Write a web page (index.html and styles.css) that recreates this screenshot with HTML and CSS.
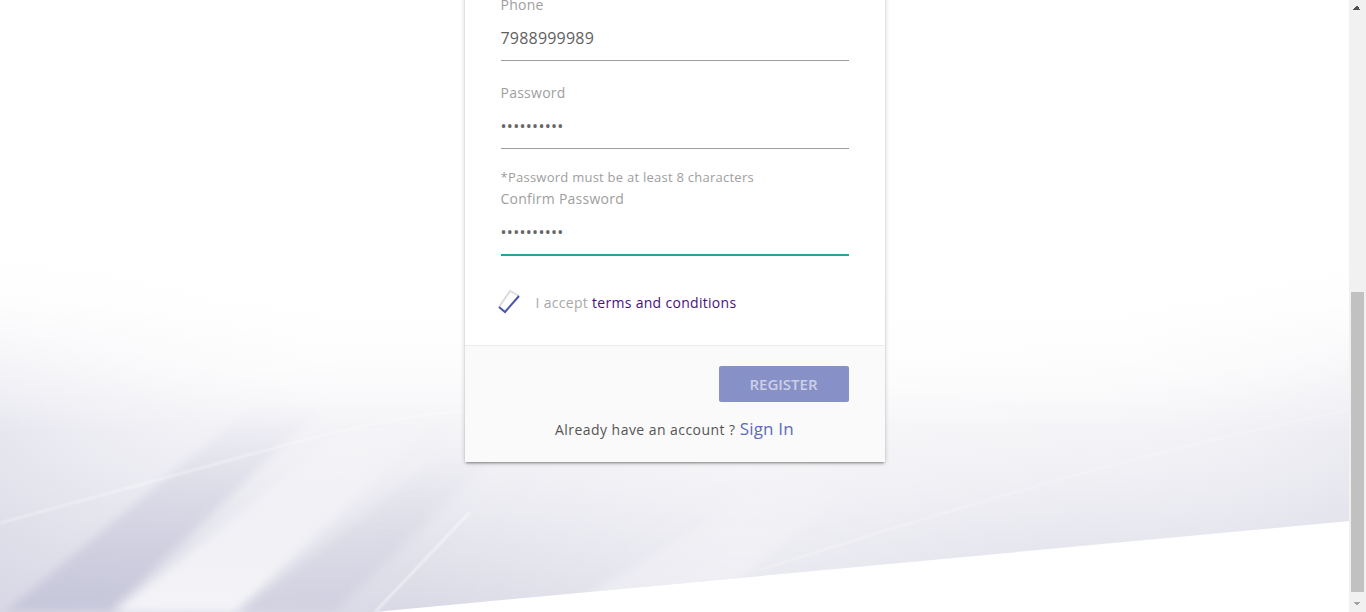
FILE: index.html
```html
<!DOCTYPE html>
<html lang="en">
<head>
<meta charset="utf-8">
<title>Register</title>
<link rel="stylesheet" href="styles.css">
</head>
<body>
<div class="page">
  <svg class="bg" viewBox="0 0 1349 362" preserveAspectRatio="none" aria-hidden="true">
    <defs>
      <linearGradient id="base" x1="0" y1="0" x2="0" y2="1">
        <stop offset="0" stop-color="#ffffff"/>
        <stop offset="0.3" stop-color="#fbfbfc"/>
        <stop offset="0.6" stop-color="#efeff4"/>
        <stop offset="1" stop-color="#d9d9e6"/>
      </linearGradient>
      <linearGradient id="side" x1="0" y1="0" x2="1" y2="0">
        <stop offset="0" stop-color="#d4d4e4" stop-opacity="0.4"/>
        <stop offset="0.3" stop-color="#ffffff" stop-opacity="0"/>
        <stop offset="0.55" stop-color="#ffffff" stop-opacity="0.35"/>
        <stop offset="0.8" stop-color="#ffffff" stop-opacity="0.1"/>
        <stop offset="1" stop-color="#dcdce8" stop-opacity="0.3"/>
      </linearGradient>
      <linearGradient id="fadeTop" x1="0" y1="0" x2="0" y2="1">
        <stop offset="0" stop-color="#ffffff" stop-opacity="1"/>
        <stop offset="0.15" stop-color="#ffffff" stop-opacity="0.9"/>
        <stop offset="0.5" stop-color="#ffffff" stop-opacity="0"/>
      </linearGradient>
      <linearGradient id="bandFade" x1="0" y1="1" x2="0" y2="0">
        <stop offset="0" stop-opacity="0.95" stop-color="#c6c6da"/>
        <stop offset="1" stop-opacity="0" stop-color="#c6c6da"/>
      </linearGradient>
      <linearGradient id="lightFade" x1="0" y1="1" x2="0" y2="0">
        <stop offset="0" stop-opacity="0.7" stop-color="#ffffff"/>
        <stop offset="1" stop-opacity="0" stop-color="#ffffff"/>
      </linearGradient>
      <filter id="blur" x="-20%" y="-20%" width="140%" height="140%">
        <feGaussianBlur stdDeviation="5"/>
      </filter>
      <filter id="soft" x="-20%" y="-20%" width="140%" height="140%">
        <feGaussianBlur stdDeviation="1.2"/>
      </filter>
      <clipPath id="clip">
        <polygon points="0,0 1349,0 1349,271 0,397"/>
      </clipPath>
    </defs>
    <g clip-path="url(#clip)">
      <rect width="1349" height="362" fill="url(#base)"/>
      <rect width="1349" height="362" fill="url(#side)"/>
      <polygon points="5,362 110,362 330,150 260,150" fill="url(#bandFade)" filter="url(#blur)"/>
      <polygon points="115,362 235,362 450,160 370,160" fill="url(#lightFade)" filter="url(#blur)"/>
      <polygon points="240,362 335,362 500,200 450,200" fill="url(#bandFade)" opacity="0.55" filter="url(#blur)"/>
      <polygon points="560,362 700,362 900,200 820,200" fill="url(#lightFade)" opacity="0.5" filter="url(#blur)"/>
      <path d="M375 362 L470 262" stroke="#ffffff" stroke-width="2" opacity="0.6" filter="url(#soft)"/>
      <path d="M0 273 Q140 235 267 200 T470 160" stroke="#ffffff" stroke-width="1.6" fill="none" opacity="0.5" filter="url(#soft)"/>
      <path d="M760 320 Q900 275 1047 233 T1349 160" stroke="#ffffff" stroke-width="1.6" fill="none" opacity="0.4" filter="url(#soft)"/>
      <rect width="1349" height="362" fill="url(#fadeTop)"/>
    </g>
  </svg>

  <main class="card">
    <div class="card-body">
      <h1 class="card-title">Register</h1>

      <div class="field">
        <label class="label" for="name">Name</label>
        <input class="input" id="name" type="text" value="Rahul Sharma">
      </div>

      <div class="field">
        <label class="label" for="email">Email</label>
        <input class="input" id="email" type="email" value="rahul@example.com">
      </div>

      <div class="field">
        <label class="label" for="phone">Phone</label>
        <input class="input" id="phone" type="tel" value="7988999989">
      </div>

      <div class="field">
        <label class="label" for="pwd">Password</label>
        <input class="input pwd" id="pwd" type="password" value="1234567890">
      </div>

      <p class="hint">*Password must be at least 8 characters</p>
      <div class="field field-confirm">
        <label class="label" for="cpwd">Confirm Password</label>
        <input class="input pwd focused" id="cpwd" type="password" value="1234567890">
      </div>

      <div class="accept">
        <svg class="check" width="28" height="26" viewBox="0 0 28 26" aria-hidden="true">
          <path d="M3 18 L14 2 L23 7" fill="none" stroke="#dcdcdc" stroke-width="2" stroke-linejoin="miter"/>
          <path d="M3 18 L9 23 L23 7" fill="none" stroke="#4a55b0" stroke-width="2" stroke-linejoin="miter"/>
        </svg>
        <span class="accept-text">I accept <a class="terms" href="#">terms and conditions</a></span>
      </div>
    </div>

    <div class="card-action">
      <div class="btn-row">
        <button class="btn" type="button">Register</button>
      </div>
      <p class="signin">Already have an account ? <a class="signin-link" href="#">Sign In</a></p>
    </div>
  </main>

  <div class="scrollbar" aria-hidden="true">
    <div class="sb-btn sb-up"></div>
    <div class="sb-track"><div class="sb-thumb"></div></div>
    <div class="sb-btn sb-down"></div>
  </div>
</div>
<script src="script.js"></script>
</body>
</html>
```

FILE: styles.css
```css
html, body {
  margin: 0;
  padding: 0;
}

body {
  background: #ffffff;
  font-family: "Open Sans", "Liberation Sans", sans-serif;
  color: #666666;
}

.page {
  position: relative;
  min-height: 1179px;
  width: calc(100% - 17px);
  display: flex;
  flex-direction: column;
  align-items: center;
  justify-content: flex-end;
  padding-bottom: 150px;
  box-sizing: border-box;
}

.bg {
  position: absolute;
  left: 0;
  bottom: 0;
  width: 100%;
  height: 362px;
  display: block;
  z-index: 0;
}

.card {
  position: relative;
  z-index: 1;
  width: 420px;
  background: #ffffff;
  border-radius: 2px;
  box-shadow: 0 2px 2px 0 rgba(0,0,0,0.14), 0 3px 1px -2px rgba(0,0,0,0.12), 0 1px 5px 0 rgba(0,0,0,0.2);
}

.card-body {
  padding: 30px 36px 0 36px;
  display: flex;
  flex-direction: column;
}

.card-title {
  margin: 0 0 20px 0;
  font-size: 24px;
  font-weight: 400;
  color: #555555;
  text-align: center;
}

.field {
  display: flex;
  flex-direction: column;
  margin-bottom: 22px;
}

.label {
  font-size: 14px;
  line-height: 20px;
  letter-spacing: 0.25px;
  color: #9e9e9e;
}

.input {
  height: 45px;
  padding: 0;
  margin: 0;
  border: none;
  border-bottom: 1px solid #9e9e9e;
  background: transparent;
  font-family: inherit;
  font-size: 16px;
  letter-spacing: 0.2px;
  color: #5f5f5f;
  outline: none;
  width: 100%;
  box-sizing: content-box;
}

.pwd {
  color: #666666;
  letter-spacing: 0.3px;
}

.focused {
  border-bottom-color: #26a69a;
  box-shadow: 0 1px 0 0 #26a69a;
}

.hint {
  margin: -3px 0 3px 0;
  font-size: 13px;
  line-height: 18px;
  letter-spacing: 0.25px;
  color: #9e9e9e;
}

.field-confirm {
  margin-bottom: 24px;
}

.accept {
  display: flex;
  align-items: center;
  height: 46px;
  margin-left: -5px;
  margin-bottom: 20px;
}

.check {
  display: block;
  flex: none;
}

.accept-text {
  margin-left: 12px;
  font-size: 14px;
  letter-spacing: 0.3px;
  color: #a8a8a8;
}

.terms {
  color: #4a0f80;
  text-decoration: none;
}

.card-action {
  background: #fafafa;
  border-top: 1px solid #ececec;
  padding: 20px 36px 22px 36px;
  display: flex;
  flex-direction: column;
}

.btn-row {
  display: flex;
  justify-content: flex-end;
}

.btn {
  width: 130px;
  height: 36px;
  border: none;
  border-radius: 2px;
  background: #8791c8;
  color: #cdd0e6;
  font-family: inherit;
  font-size: 15px;
  font-weight: 600;
  letter-spacing: 0;
  text-transform: uppercase;
  padding: 0;
}

.signin {
  margin: 17px 0 0 0;
  text-align: center;
  font-size: 14px;
  line-height: 20px;
  letter-spacing: 0.45px;
  color: #555555;
}

.signin-link {
  color: #5c6bc0;
  font-size: 17px;
  letter-spacing: 0.2px;
  text-decoration: none;
}

/* drawn window scrollbar (overlays the right edge of the viewport) */
.scrollbar {
  position: fixed;
  top: 0;
  right: 0;
  width: 17px;
  height: 100vh;
  background: #f1f1f1;
  display: flex;
  flex-direction: column;
  z-index: 5;
}

.sb-btn {
  height: 17px;
  flex: none;
  background-repeat: no-repeat;
  background-size: 4px 4px, 4px 4px;
}

.sb-up {
  background-image:
    linear-gradient(to bottom right, transparent 50%, #505050 50%),
    linear-gradient(to bottom left, transparent 50%, #505050 50%);
  background-position: 4px 6px, 8px 6px;
}

.sb-down {
  background-image:
    linear-gradient(to top right, transparent 50%, #a3a3a3 50%),
    linear-gradient(to top left, transparent 50%, #a3a3a3 50%);
  background-position: 4px 7px, 8px 7px;
}

.sb-track {
  flex: 1;
  display: flex;
  flex-direction: column;
  justify-content: flex-end;
  padding: 0 2px 3px 2px;
}

.sb-thumb {
  height: 300px;
  background: #c1c1c1;
}
```

FILE: script.js
```js
function toBottom() {
  window.scrollTo(0, document.documentElement.scrollHeight);
}
toBottom();
window.addEventListener('load', toBottom);
```
